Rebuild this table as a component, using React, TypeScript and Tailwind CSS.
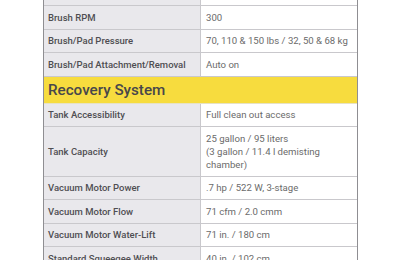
const rows: { label: string; value: React.ReactNode }[] = [
  { label: "Brush Motor", value: "1.5 hp" },
  { label: "Brush RPM", value: "300" },
  { label: "Brush/Pad Pressure", value: "70, 110 & 150 lbs / 32, 50 & 68 kg" },
  { label: "Brush/Pad Attachment/Removal", value: "Auto on" },
];

const recovery: { label: string; value: React.ReactNode }[] = [
  { label: "Tank Accessibility", value: "Full clean out access" },
  {
    label: "Tank Capacity",
    value: (
      <>
        25 gallon / 95 liters
        <br />
        (3 gallon / 11.4 l demisting chamber)
      </>
    ),
  },
  { label: "Vacuum Motor Power", value: ".7 hp / 522 W, 3-stage" },
  { label: "Vacuum Motor Flow", value: "71 cfm / 2.0 cmm" },
  { label: "Vacuum Motor Water-Lift", value: "71 in. / 180 cm" },
  { label: "Standard Squeegee Width", value: "40 in. / 102 cm" },
];

function Row({ label, value }: { label: string; value: React.ReactNode }) {
  return (
    <div className="grid grid-cols-[157px_1fr] border-b border-[#c9c8cc]">
      <div className="flex items-center bg-[#e9e8ec] border-r border-[#c9c8cc] px-[4px] py-[4.75px] text-[9.5px] leading-[13px] font-medium text-[#4f4e52]">
        {label}
      </div>
      <div className="flex items-center bg-white pl-[5px] pr-[8px] py-[4.75px] text-[9.6px] leading-[13px] text-[#6b6b6b]">
        <span>{value}</span>
      </div>
    </div>
  );
}

export default function App() {
  return (
    <div className="w-[400px] h-[260px] overflow-hidden bg-white" style={{ fontFamily: "Roboto, 'Liberation Sans', sans-serif" }}>
      <div className="ml-[43px] w-[315px] -mt-[17.5px] border-x border-[#8f8e92]">
        {rows.map((r) => (
          <Row key={r.label} {...r} />
        ))}
        <div className="bg-[#f7dc3e] border-b border-[#e7e2c4] px-[4px] py-[4px] text-[15.2px] leading-[18px] font-medium text-[#48474b]">
          Recovery System
        </div>
        {recovery.map((r) => (
          <Row key={r.label} {...r} />
        ))}
      </div>
    </div>
  );
}
